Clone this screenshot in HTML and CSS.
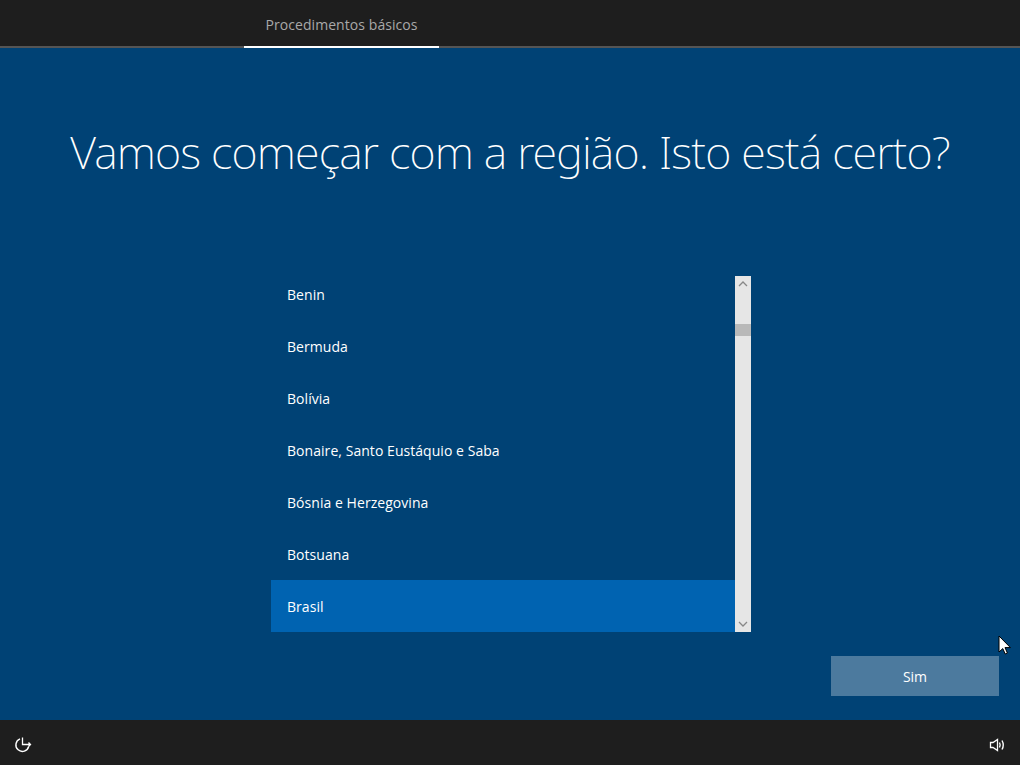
FILE: index.html
```html
<!DOCTYPE html>
<html lang="pt">
<head>
<meta charset="utf-8">
<title>Região</title>
<link rel="stylesheet" href="styles.css">
</head>
<body>
<div class="page">
  <header class="top">
    <div class="tab">Procedimentos básicos</div>
  </header>
  <main class="main">
    <h1 class="title">Vamos começar com a região. Isto está certo?</h1>
    <div class="picker">
      <ul class="list">
        <li class="row">Benin</li>
        <li class="row">Bermuda</li>
        <li class="row">Bolívia</li>
        <li class="row">Bonaire, Santo Eustáquio e Saba</li>
        <li class="row">Bósnia e Herzegovina</li>
        <li class="row">Botsuana</li>
        <li class="row selected">Brasil</li>
      </ul>
      <div class="scrollbar">
        <svg class="arrow" width="16" height="16" viewBox="0 0 16 16"><path d="M4 10 L8 6 L12 10" fill="none" stroke="#888" stroke-width="1.3"/></svg>
        <div class="track"><div class="thumb"></div></div>
        <svg class="arrow" width="16" height="16" viewBox="0 0 16 16"><path d="M4 6 L8 10 L12 6" fill="none" stroke="#888" stroke-width="1.3"/></svg>
      </div>
    </div>
    <div class="actions"><button class="yes">Sim</button></div>
  </main>
  <footer class="bottom">
    <svg class="icon" width="18" height="18" viewBox="0 0 18 18"><path d="M6 2.9 A6.5 6.5 0 1 0 14.7 10.5" fill="none" stroke="#fff" stroke-width="1.4"/><path d="M8.5 1.5 V8.5 H16.5 M14.5 6.5 L16.5 8.5 L14.5 10.5" fill="none" stroke="#fff" stroke-width="1.3"/></svg>
    <svg class="icon" width="18" height="18" viewBox="0 0 18 18"><path d="M2.5 6.5 H5 L9.5 3.5 V14.5 L5 11.5 H2.5 Z" fill="none" stroke="#fff" stroke-width="1.3"/><path d="M11.5 6.5 Q12.8 9 11.5 11.5 M14 4.5 Q16.5 9 14 13.5" fill="none" stroke="#fff" stroke-width="1.4"/></svg>
  </footer>
  <svg class="cursor" width="14" height="21" viewBox="0 0 14 21"><path d="M1 1 V17 L4.8 13.6 L7.2 19 L9.4 18 L7 12.6 H12.4 Z" fill="#fff" stroke="#000" stroke-width="1"/></svg>
</div>
</body>
</html>
```
FILE: styles.css
```css
* { box-sizing: border-box; }
html, body { margin: 0; padding: 0; }
body { font-family: "Open Sans", "Liberation Sans", sans-serif; color: #fff; }
.page { position: relative; width: 1020px; height: 765px; display: flex; flex-direction: column; background: #004275; overflow: hidden; }
.top { height: 48px; background: #1e1e1e; border-bottom: 2px solid #555; padding-left: 244px; flex: none; }
.tab { width: 195px; height: 48px; border-bottom: 2px solid #fff; text-align: center; font-size: 14px; line-height: 50px; color: #a9a9a9; white-space: nowrap; letter-spacing: 0.07px; }
.main { flex: 1; display: flex; flex-direction: column; padding: 0 21px 24px 0; }
.title { margin: 72px 0 0 21px; height: 156px; font-family: "Noto Sans", sans-serif; font-weight: 200; font-size: 45px; line-height: 64px; text-align: center; white-space: nowrap; letter-spacing: -0.87px; }
.picker { display: flex; width: 480px; height: 356px; margin-left: 271px; }
.list { list-style: none; margin: 0; padding: 0; flex: 1; overflow: hidden; }
.row { height: 52px; padding-left: 16px; font-size: 14px; white-space: nowrap; display: flex; align-items: center; letter-spacing: 0.05px; }
.row:first-child { margin-top: -8px; }
.row.selected { background: #0063b1; }
.scrollbar { width: 16px; background: #e6e6e6; display: flex; flex-direction: column; }
.arrow { flex: none; display: block; }
.track { flex: 1; padding-top: 32px; }
.thumb { height: 12px; background: #b9b9b9; }
.actions { display: flex; justify-content: flex-end; margin-top: 24px; }
.yes { width: 168px; height: 40px; border: 0; background: #4c7a9e; color: #fff; font: 14px "Open Sans", "Liberation Sans", sans-serif; padding: 0; }
.bottom { height: 45px; background: #1e1e1e; flex: none; display: flex; justify-content: space-between; align-items: flex-start; padding: 16px 14px 0; }
.icon { display: block; }
.cursor { position: absolute; left: 998px; top: 635px; }
```
